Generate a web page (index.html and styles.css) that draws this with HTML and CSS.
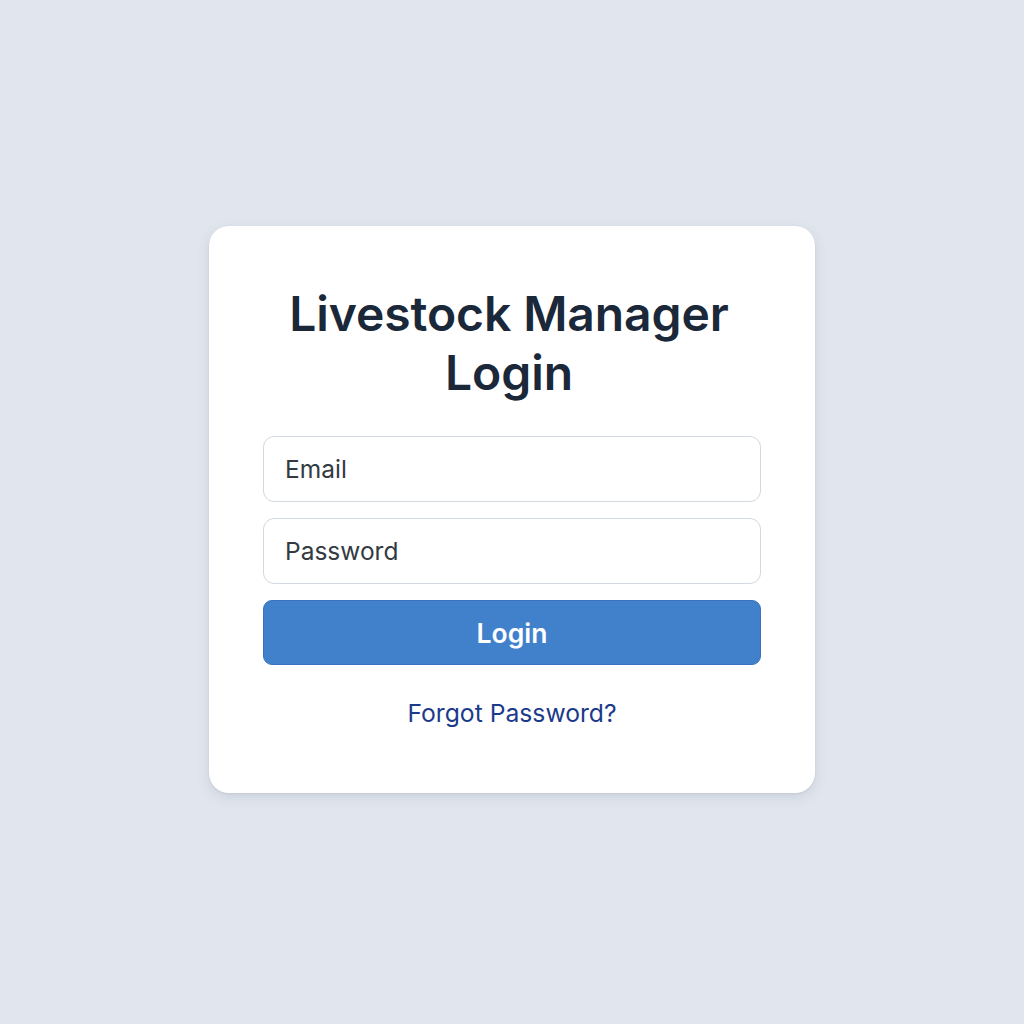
FILE: index.html
```html
<!DOCTYPE html>
<html lang="en">
<head>
<meta charset="utf-8">
<title>Livestock Manager Login</title>
<link rel="stylesheet" href="styles.css">
</head>
<body>
<main class="card">
  <h1 class="title">Livestock Manager<br>Login</h1>
  <form class="form">
    <input class="field" type="email" placeholder="Email">
    <input class="field" type="password" placeholder="Password">
    <button class="btn" type="button">Login</button>
  </form>
  <a class="link" href="#">Forgot Password?</a>
</main>
</body>
</html>
```

FILE: styles.css
```css
* { box-sizing: border-box; }
html, body { margin: 0; height: 100%; }
body {
  background: #e1e6ee;
  font-family: Inter, "Noto Sans", sans-serif;
  display: flex;
  align-items: center;
  justify-content: center;
}
.card {
  width: 606px;
  height: 567px;
  background: #fff;
  border-radius: 20px;
  box-shadow: 0 4px 14px rgba(40, 60, 90, 0.12), 0 1px 2px rgba(40,60,90,0.08);
  padding: 58px 54px 0;
  display: flex;
  flex-direction: column;
  align-items: stretch;
  margin-top: -5px;
}
.title {
  margin: 0 0 0 -6px;
  text-align: center;
  font-size: 48px;
  line-height: 59px;
  font-weight: 600;
  color: #1b2839;
  letter-spacing: -0.1px;
}
.form {
  display: flex;
  flex-direction: column;
  gap: 16px;
  margin-top: 34px;
}
.field {
  height: 66px;
  border: 1px solid #d3d9e1;
  border-radius: 11px;
  padding: 0 21px;
  font-family: inherit;
  font-size: 24.5px;
  color: #333;
  background: #fff;
  outline: none;
}
.field::placeholder { color: #333a42; }
.btn {
  height: 65px;
  border: 1px solid #3872c0;
  border-radius: 9px;
  background: #4181cc;
  color: #fff;
  font-family: inherit;
  font-size: 26.5px;
  font-weight: 600;
}
.link {
  margin-top: 33px;
  text-align: center;
  color: #1c3a8c;
  font-size: 24.7px;
  text-decoration: none;
}
```
